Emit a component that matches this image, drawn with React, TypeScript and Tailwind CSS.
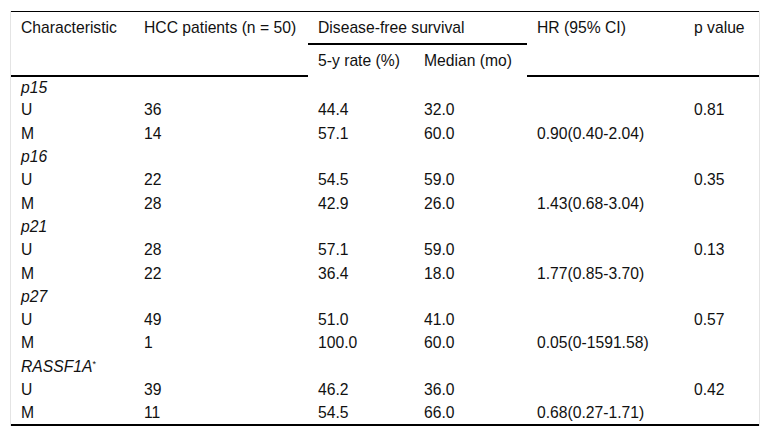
import React from 'react';

type Row = { gene: string; u: string[]; m: string[] };

const rows: Row[] = [
  { gene: 'p15', u: ['36', '44.4', '32.0', '', '0.81'], m: ['14', '57.1', '60.0', '0.90(0.40-2.04)', ''] },
  { gene: 'p16', u: ['22', '54.5', '59.0', '', '0.35'], m: ['28', '42.9', '26.0', '1.43(0.68-3.04)', ''] },
  { gene: 'p21', u: ['28', '57.1', '59.0', '', '0.13'], m: ['22', '36.4', '18.0', '1.77(0.85-3.70)', ''] },
  { gene: 'p27', u: ['49', '51.0', '41.0', '', '0.57'], m: ['1', '100.0', '60.0', '0.05(0-1591.58)', ''] },
  { gene: 'RASSF1A', u: ['39', '46.2', '36.0', '', '0.42'], m: ['11', '54.5', '66.0', '0.68(0.27-1.71)', ''] },
];

const head = 'pl-[10px] pr-1 align-top text-left font-normal pt-[7px]';
const cell = 'pl-[10px] pr-1 align-middle';

export default function App() {
  return (
    <div className="w-[770px] h-[438px] bg-white pt-[11px] pl-[10px]" style={{ fontFamily: '"Liberation Sans", Arial, sans-serif' }}>
      <div className="w-[750px] border-x border-[#e4e4e4]">
        <table className="w-[748px] table-fixed border-collapse text-[15.7px] leading-[18px] text-[#111]">
          <colgroup>
            <col className="w-[123px]" />
            <col className="w-[174px]" />
            <col className="w-[106px]" />
            <col className="w-[113px]" />
            <col className="w-[157px]" />
            <col className="w-[75px]" />
          </colgroup>
          <thead>
            <tr className="border-t border-black">
              <th rowSpan={2} className={`${head} border-b-2 border-black`}>Characteristic</th>
              <th rowSpan={2} className={`${head} border-b-2 border-black`}>HCC patients (n = 50)</th>
              <th colSpan={2} className={`${head} h-[32px] border-b-2 border-black`}>Disease-free survival</th>
              <th rowSpan={2} className={`${head} border-b-2 border-black`}>HR (95% CI)</th>
              <th rowSpan={2} className={`${head} border-b-2 border-black`}>p value</th>
            </tr>
            <tr>
              <th className={`${head} h-[32px]`}>5-y rate (%)</th>
              <th className={`${head} h-[32px]`}>Median (mo)</th>
            </tr>
          </thead>
          <tbody className="border-b-2 border-black">
            {rows.map((r) => (
              <React.Fragment key={r.gene}>
                <tr className="h-[23.3px]">
                  <td className={`${cell} italic`}>
                    {r.gene}
                    {r.gene === 'RASSF1A' && <sup className="not-italic text-[9px]">*</sup>}
                  </td>
                  <td colSpan={5}></td>
                </tr>
                <tr className="h-[23.3px]">
                  <td className={cell}>U</td>
                  {r.u.map((v, i) => <td key={i} className={cell}>{v}</td>)}
                </tr>
                <tr className="h-[23.3px]">
                  <td className={cell}>M</td>
                  {r.m.map((v, i) => <td key={i} className={cell}>{v}</td>)}
                </tr>
              </React.Fragment>
            ))}
          </tbody>
        </table>
      </div>
    </div>
  );
}
